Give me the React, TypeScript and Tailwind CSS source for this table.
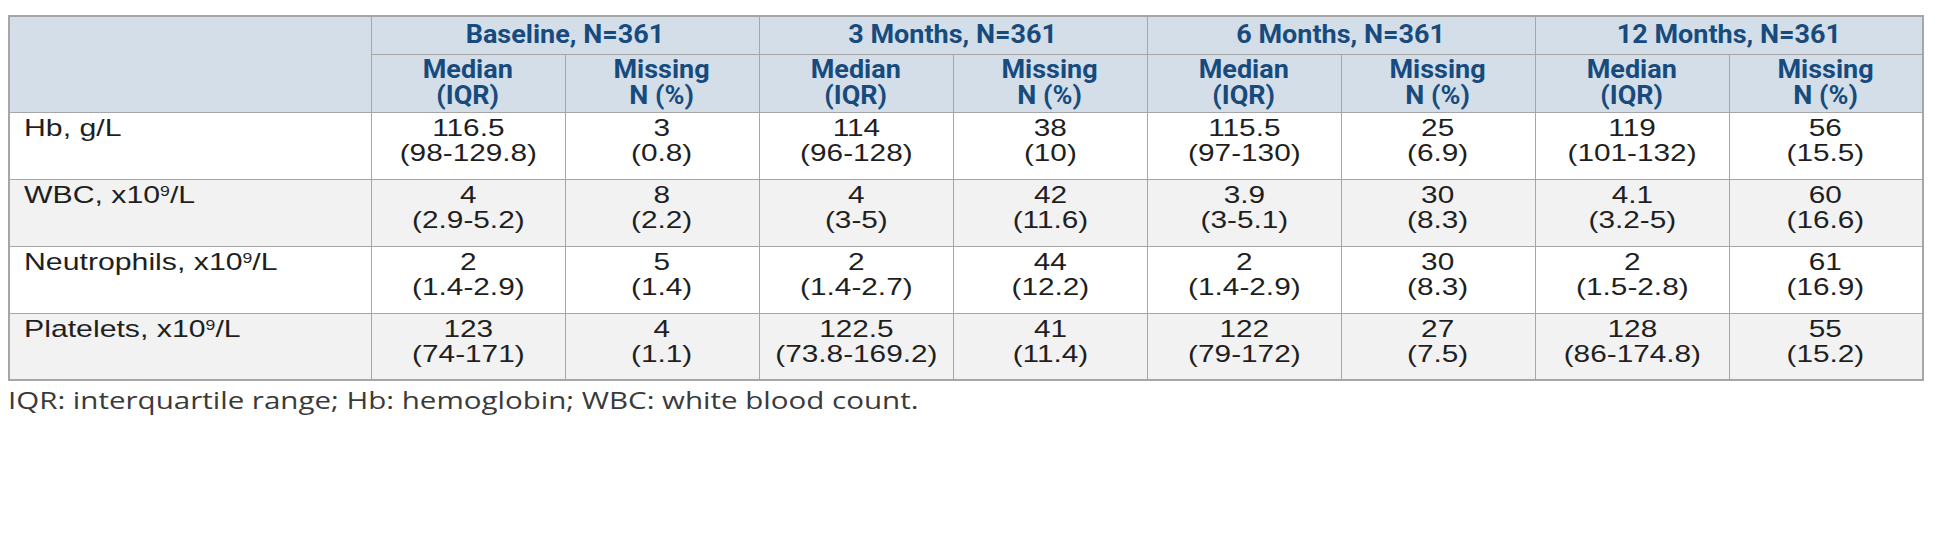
const groups = ["Baseline, N=361", "3 Months, N=361", "6 Months, N=361", "12 Months, N=361"];

type Row = { label: string; sup?: boolean; cells: [string, string][] };

const rows: Row[] = [
  {
    label: "Hb, g/L",
    cells: [["116.5", "(98-129.8)"], ["3", "(0.8)"], ["114", "(96-128)"], ["38", "(10)"], ["115.5", "(97-130)"], ["25", "(6.9)"], ["119", "(101-132)"], ["56", "(15.5)"]],
  },
  {
    label: "WBC, x10",
    sup: true,
    cells: [["4", "(2.9-5.2)"], ["8", "(2.2)"], ["4", "(3-5)"], ["42", "(11.6)"], ["3.9", "(3-5.1)"], ["30", "(8.3)"], ["4.1", "(3.2-5)"], ["60", "(16.6)"]],
  },
  {
    label: "Neutrophils, x10",
    sup: true,
    cells: [["2", "(1.4-2.9)"], ["5", "(1.4)"], ["2", "(1.4-2.7)"], ["44", "(12.2)"], ["2", "(1.4-2.9)"], ["30", "(8.3)"], ["2", "(1.5-2.8)"], ["61", "(16.9)"]],
  },
  {
    label: "Platelets, x10",
    sup: true,
    cells: [["123", "(74-171)"], ["4", "(1.1)"], ["122.5", "(73.8-169.2)"], ["41", "(11.4)"], ["122", "(79-172)"], ["27", "(7.5)"], ["128", "(86-174.8)"], ["55", "(15.2)"]],
  },
];

export default function App() {
  return (
    <div className="w-[1937px] h-[551px] bg-white pt-[15px] pl-[8px] overflow-hidden">
      <table className="border-collapse border-2 border-[#a6a6a6] table-fixed w-[1913px]">
        <colgroup>
          <col className="w-[362px]" />
          {Array.from({ length: 8 }).map((_, i) => (
            <col key={i} className="w-[194px]" />
          ))}
        </colgroup>
        <thead className="bg-[#d3dee8] text-[#174b7e] text-[25px] leading-[26px] [font-family:Roboto,'Liberation_Sans',sans-serif]">
          <tr className="h-[38px]">
            <th rowSpan={2} className="border border-[#a6a6a6]" />
            {groups.map((g) => (
              <th key={g} colSpan={2} className="border border-[#a6a6a6] text-center font-bold">
                <span className="inline-block scale-x-[1.08]">{g}</span>
              </th>
            ))}
          </tr>
          <tr className="h-[58px]">
            {groups.map((g) => [
              <th key={g + "m"} className="border border-[#a6a6a6] text-center font-bold">
                <span className="inline-block scale-x-[1.08]">
                  Median
                  <br />
                  (IQR)
                </span>
              </th>,
              <th key={g + "n"} className="border border-[#a6a6a6] text-center font-bold">
                <span className="inline-block scale-x-[1.08]">
                  Missing
                  <br />
                  N (%)
                </span>
              </th>,
            ])}
          </tr>
        </thead>
        <tbody className="text-[#1f1f1f] text-[24px] leading-[25px] [font-family:'Liberation_Sans',Arial,sans-serif]">
          {rows.map((r, i) => (
            <tr key={r.label} className={i % 2 === 1 ? "h-[67px] bg-[#f2f2f2]" : "h-[67px] bg-white"}>
              <td className="border border-[#a6a6a6] align-top pl-[14px] pt-[2px]">
                <span className="inline-block origin-left scale-x-[1.26]">
                  {r.label}
                  {r.sup && (
                    <>
                      <sup className="text-[14px]">9</sup>/L
                    </>
                  )}
                </span>
              </td>
              {r.cells.map(([a, b], j) => (
                <td key={j} className="border border-[#a6a6a6] text-center align-top pt-[2px]">
                  <span className="inline-block scale-x-[1.24]">
                    {a}
                    <br />
                    {b}
                  </span>
                </td>
              ))}
            </tr>
          ))}
        </tbody>
      </table>
      <p className="mt-[5px] text-[24px] leading-[28px] text-[#3a3a3a] [font-family:'Open_Sans',sans-serif]">
        <span className="inline-block origin-left scale-x-[1.23]">
          IQR: interquartile range; Hb: hemoglobin; WBC: white blood count.
        </span>
      </p>
    </div>
  );
}
